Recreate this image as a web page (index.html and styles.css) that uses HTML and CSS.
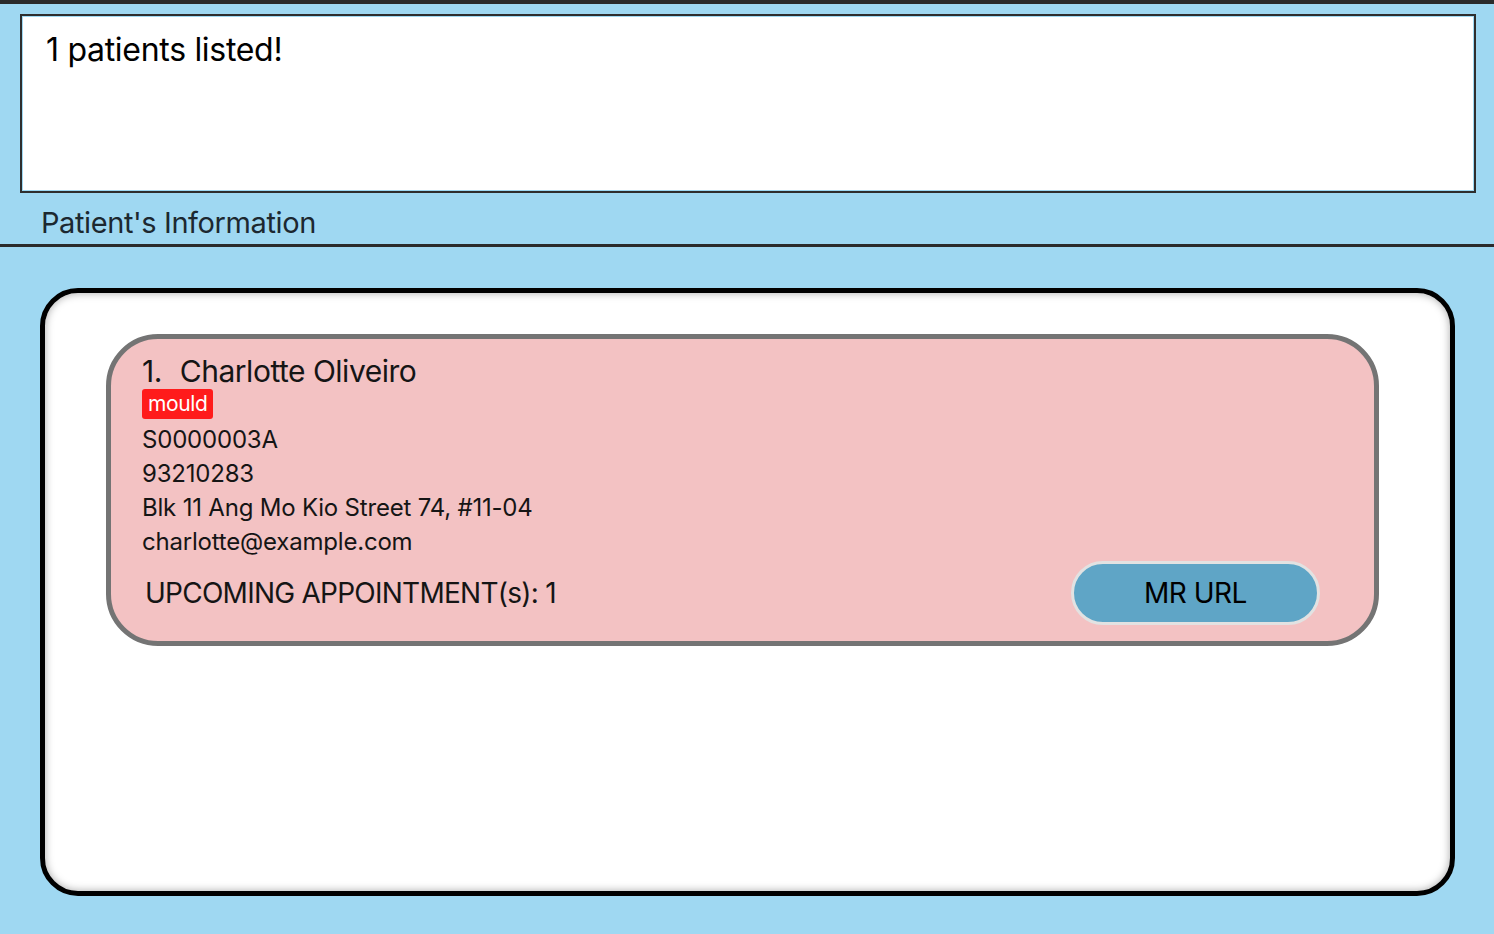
FILE: index.html
```html
<!DOCTYPE html>
<html>
<head>
<meta charset="utf-8">
<link rel="stylesheet" href="styles.css">
</head>
<body>
<div class="app">
  <div class="result-box">
    <div class="result-text">1 patients listed!</div>
  </div>
  <div class="section-title">Patient's Information</div>
  <div class="list-area">
    <div class="list-panel">
      <div class="patient-card">
        <div class="name"><span class="idx">1.</span>Charlotte Oliveiro</div>
        <div class="tags"><span class="tag">mould</span></div>
        <div class="field">S0000003A</div>
        <div class="field">93210283</div>
        <div class="field">Blk 11 Ang Mo Kio Street 74, #11-04</div>
        <div class="field">charlotte@example.com</div>
        <div class="bottom-row">
          <div class="appt">UPCOMING APPOINTMENT(s): 1</div>
          <div class="mr-btn">MR URL</div>
        </div>
      </div>
    </div>
  </div>
</div>
</body>
</html>
```
FILE: styles.css
```css
html, body {
  margin: 0;
  padding: 0;
}
body {
  background: #9fd8f2;
  font-family: Inter, "Noto Sans", sans-serif;
  color: #111;
}
.app {
  border-top: 4px solid #2b2b2b;
  height: 930px;
  box-sizing: border-box;
}
.result-box {
  margin: 10px 18px 0 20px;
  height: 179px;
  box-sizing: border-box;
  border: 2px solid #2e2e2e;
  background: #fff;
  box-shadow: inset 0 0 0 1px #9fd8f2;
  padding: 16px 0 0 24px;
}
.result-text {
  font-size: 32px;
  letter-spacing: -0.3px;
  line-height: 36px;
  color: #000;
}
.section-title {
  height: 54px;
  box-sizing: border-box;
  padding: 12px 0 0 41px;
  font-size: 29px;
  letter-spacing: -0.4px;
  line-height: 36px;
  color: #1c2830;
  border-bottom: 3px solid #2b2b2b;
}
.list-area {
  padding: 41px 39px 0 40px;
}
.list-panel {
  height: 608px;
  box-sizing: border-box;
  border: 5px solid #000;
  border-radius: 38px;
  background: #fff;
  box-shadow: inset 0 0 8px rgba(0,0,0,0.35);
  padding: 41px 71px 0 61px;
}
.patient-card {
  height: 312px;
  box-sizing: border-box;
  border: 5px solid #747474;
  border-radius: 52px;
  background: #f3c2c3;
  padding: 14px 54px 0 31px;
}
.name {
  font-size: 30px;
  line-height: 36px;
  letter-spacing: -0.5px;
  color: #151515;
}
.idx {
  margin-right: 18px;
}
.tags {
  height: 34px;
}
.tag {
  display: inline-block;
  vertical-align: top;
  background: #ff1b1b;
  color: #fff;
  font-size: 21px;
  line-height: 30px;
  padding: 0 6px;
  border-radius: 3px;
  letter-spacing: -0.4px;
}
.field {
  font-size: 24px;
  line-height: 34px;
  letter-spacing: -0.2px;
  color: #151515;
}
.bottom-row {
  display: flex;
  justify-content: space-between;
  align-items: center;
  margin-top: 2px;
}
.appt {
  font-size: 28px;
  letter-spacing: -0.75px;
  padding-left: 3px;
  color: #151515;
}
.mr-btn {
  width: 249px;
  height: 64px;
  box-sizing: border-box;
  border: 3px solid #e2e2e2;
  border-radius: 32px;
  background: #5fa5c6;
  display: flex;
  align-items: center;
  justify-content: center;
  font-size: 28px;
  letter-spacing: -0.5px;
  color: #000;
}
```
